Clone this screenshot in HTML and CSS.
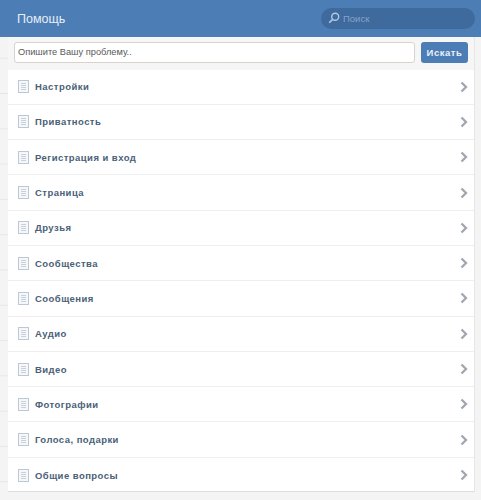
FILE: index.html
```html
<!DOCTYPE html>
<html lang="ru">
<head>
<meta charset="utf-8">
<title>Помощь</title>
<link rel="stylesheet" href="styles.css">
</head>
<body>
<svg class="sprites" width="0" height="0" aria-hidden="true">
  <symbol id="doc" viewBox="0 0 11 13">
    <rect x=".5" y=".5" width="10" height="12" fill="#f5f7fa" stroke="#bcc8d6"/>
    <path d="M3 3.500h5M3 5.500h5M3 7.500h5M3 9.500h5" stroke="#c8d0da" fill="none"/>
  </symbol>
  <symbol id="chev" viewBox="0 0 8 12">
    <path d="M1.500 1.500 6 6l-4.500 4.500" stroke="#a0a7b0" stroke-width="2.300" fill="none"/>
  </symbol>
</svg>
<header class="topbar">
  <h1 class="title">Помощь</h1>
  <div class="topsearch">
    <svg class="loupe" width="12" height="12" viewBox="0 0 12 12"><circle cx="7.200" cy="4.800" r="3.500" fill="none" stroke="#b5c8de" stroke-width="1.400"/><path d="M4.600 7.400 1.200 10.800" stroke="#b5c8de" stroke-width="1.600"/></svg>
    <span class="topsearch-text">Поиск</span>
  </div>
</header>
<main class="panel">
  <form class="askrow">
    <div class="askinput">Опишите Вашу проблему..</div>
    <button class="askbtn" type="button">Искать</button>
  </form>
  <ul class="list">
    <li class="row"><svg class="doc"><use href="#doc"/></svg><span class="label">Настройки</span><svg class="chev"><use href="#chev"/></svg></li>
    <li class="row"><svg class="doc"><use href="#doc"/></svg><span class="label">Приватность</span><svg class="chev"><use href="#chev"/></svg></li>
    <li class="row"><svg class="doc"><use href="#doc"/></svg><span class="label">Регистрация и вход</span><svg class="chev"><use href="#chev"/></svg></li>
    <li class="row"><svg class="doc"><use href="#doc"/></svg><span class="label">Страница</span><svg class="chev"><use href="#chev"/></svg></li>
    <li class="row"><svg class="doc"><use href="#doc"/></svg><span class="label">Друзья</span><svg class="chev"><use href="#chev"/></svg></li>
    <li class="row"><svg class="doc"><use href="#doc"/></svg><span class="label">Сообщества</span><svg class="chev"><use href="#chev"/></svg></li>
    <li class="row"><svg class="doc"><use href="#doc"/></svg><span class="label">Сообщения</span><svg class="chev"><use href="#chev"/></svg></li>
    <li class="row"><svg class="doc"><use href="#doc"/></svg><span class="label">Аудио</span><svg class="chev"><use href="#chev"/></svg></li>
    <li class="row"><svg class="doc"><use href="#doc"/></svg><span class="label">Видео</span><svg class="chev"><use href="#chev"/></svg></li>
    <li class="row"><svg class="doc"><use href="#doc"/></svg><span class="label">Фотографии</span><svg class="chev"><use href="#chev"/></svg></li>
    <li class="row"><svg class="doc"><use href="#doc"/></svg><span class="label">Голоса, подарки</span><svg class="chev"><use href="#chev"/></svg></li>
    <li class="row"><svg class="doc"><use href="#doc"/></svg><span class="label">Общие вопросы</span><svg class="chev"><use href="#chev"/></svg></li>
  </ul>
</main>
</body>
</html>
```

FILE: styles.css
```css
* { box-sizing: border-box; }
html, body { margin: 0; padding: 0; }
body {
  height: 500px;
  overflow: hidden;
  background-color: #f4f4f5;
  background-image: linear-gradient(to bottom, #e7e7e8 0, #e7e7e8 1px, transparent 1px);
  background-size: 8px 35.300px;
  background-position: 0 22.400px;
  background-repeat: repeat-y;
}
body, button { font-family: "Liberation Sans", Arial, sans-serif; }
.sprites { position: absolute; }
.topbar {
  height: 37px;
  background: #4d7db5;
  display: flex;
  align-items: center;
  justify-content: space-between;
  padding: 0 6px 0 17px;
}
.title {
  margin: 0;
  font-size: 12.500px;
  font-weight: 400;
  color: #e6eef7;
}
.topsearch {
  width: 154px;
  height: 21px;
  margin-bottom: 1px;
  border-radius: 11px;
  background: #3f6a9e;
  display: flex;
  align-items: center;
  gap: 3px;
  padding-left: 7px;
}
.topsearch-text { font-size: 9.500px; color: #86a3c6; }
.panel {
  margin: 0 6px 0 8px;
  height: 455px;
  background: #fff;
  border-right: 1px solid #e6e6e7;
  border-bottom: 1px solid #dcdee0;
}
.askrow {
  height: 32.500px;
  margin: 0;
  display: flex;
  align-items: flex-start;
  gap: 6px;
  padding: 5px 6px 0 6px;
  background: #f6f6f6;
}
.askinput {
  flex: 1;
  height: 21px;
  background: #fff;
  border: 1px solid #d8d4cc;
  border-radius: 3px;
  font-size: 9.250px;
  line-height: 19px;
  color: #5a5a5a;
  padding-left: 3px;
}
.askbtn {
  width: 47px;
  height: 21px;
  border: 0;
  border-radius: 3px;
  background: #4d7db5;
  color: #e9f0f8;
  font-size: 9.500px;
  font-weight: 700;
  letter-spacing: .55px;
  padding: 0;
}
.list { list-style: none; margin: 0; padding: 0; }
.row {
  height: 35.300px;
  display: flex;
  align-items: center;
  padding: 0 6px 0 10px;
  border-bottom: 1px solid #eeeeee;
}
.row:last-child { border-bottom: 0; }
.doc { width: 11px; height: 13px; flex: none; }
.label {
  flex: 1;
  margin-left: 6px;
  font-size: 9.500px;
  font-weight: 700;
  letter-spacing: .45px;
  color: #4a5f78;
}
.chev { width: 8px; height: 12px; flex: none; }
```
